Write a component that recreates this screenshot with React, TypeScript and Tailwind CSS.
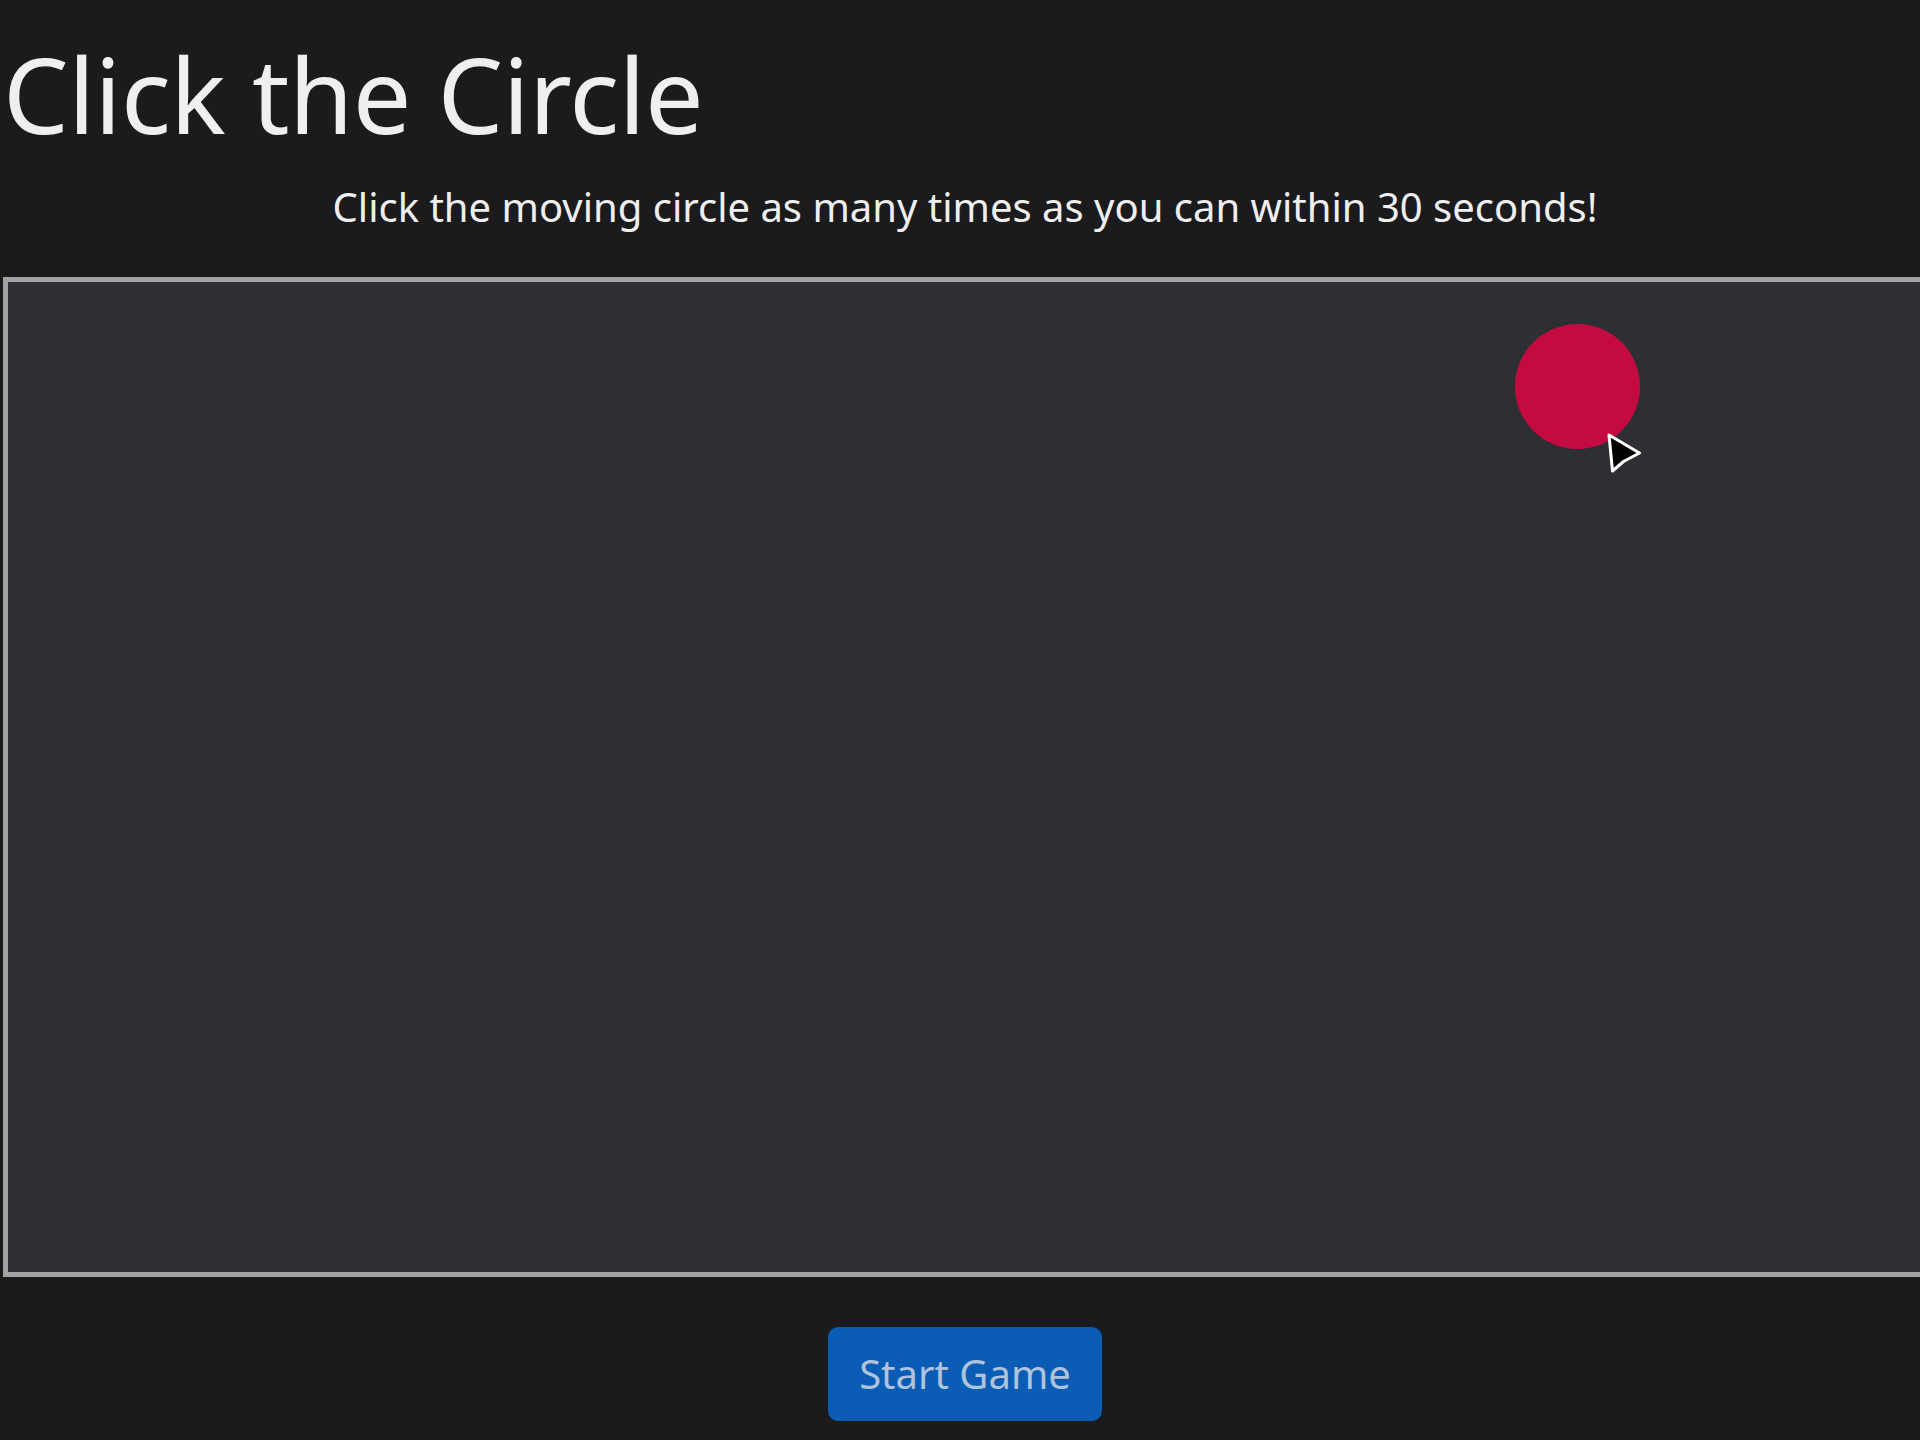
import * as React from 'react';

const CursorIcon = (props: React.SVGProps<SVGSVGElement>) => (
  <svg xmlns="http://www.w3.org/2000/svg" viewBox="0 0 40 46" {...props}>
    <path d="M5 5 L8.5 41 L19.5 31.5 L35.5 23 Z" fill="#000" stroke="#fff" strokeWidth={3} strokeLinejoin="round" />
  </svg>
);

export default function App() {
  const [started, setStarted] = React.useState(false);
  const [pos] = React.useState({ left: 1507, top: 42 });

  return (
    <div className="min-h-[1440px] w-full overflow-hidden bg-[#1b1b1e] text-[#efefef] font-['Noto_Sans',sans-serif]">
      <div className="ml-[3px] w-[1924px] flex flex-col">
        <h1 className="pt-[42px] text-[104px] leading-none font-normal tracking-[-0.5px]">Click the Circle</h1>
        <p className="mt-[39px] text-center text-[40px] leading-[43px]">
          Click the moving circle as many times as you can within 30 seconds!
        </p>
        <div className="relative mt-[49px] h-[1000px] w-full border-[5px] border-[#a3a3a3] bg-[#2e2f35]">
          <div
            className="absolute h-[125px] w-[125px] rounded-full bg-[#c40b3f] cursor-pointer"
            style={{ left: pos.left, top: pos.top }}
          />
          <CursorIcon className="absolute left-[1596px] top-[148px] h-[46px] w-[40px]" />
        </div>
        <div className="flex justify-center pt-[50px]">
          <button
            onClick={() => setStarted(!started)}
            className="h-[94px] w-[274px] rounded-[10px] bg-[#0b5cb4] text-[40px] leading-none text-[#aec3dc]"
          >
            Start Game
          </button>
        </div>
      </div>
    </div>
  );
}
